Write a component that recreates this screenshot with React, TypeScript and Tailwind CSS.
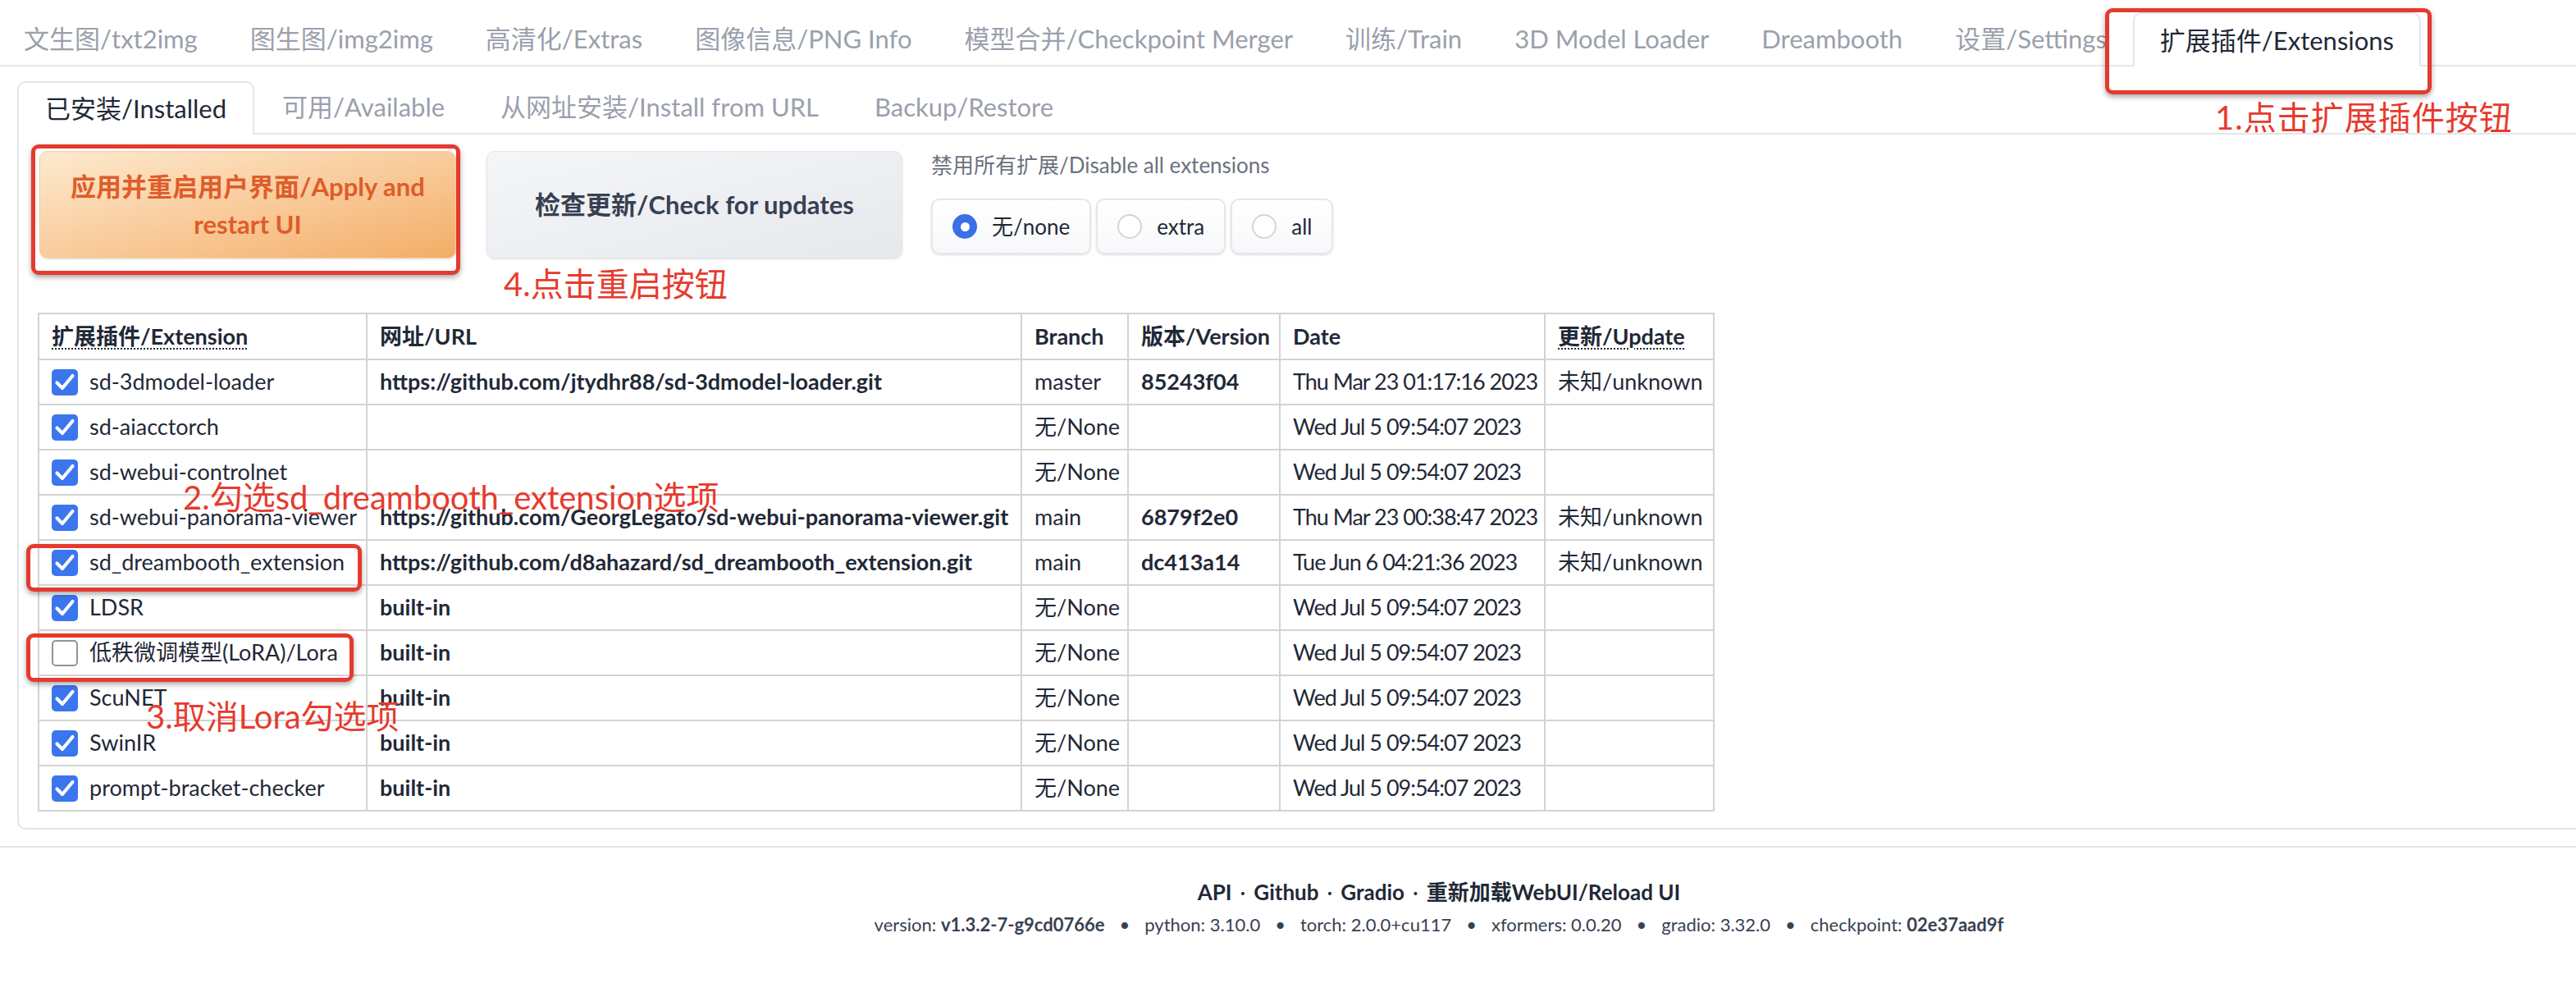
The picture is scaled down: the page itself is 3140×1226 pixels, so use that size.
import React from 'react'

const mainTabs = [
  '文生图/txt2img',
  '图生图/img2img',
  '高清化/Extras',
  '图像信息/PNG Info',
  '模型合并/Checkpoint Merger',
  '训练/Train',
  '3D Model Loader',
  'Dreambooth',
  '设置/Settings',
  '扩展插件/Extensions',
]

const subTabs = ['已安装/Installed', '可用/Available', '从网址安装/Install from URL', 'Backup/Restore']

type Ext = {
  name: string
  url: string
  branch: string
  version: string
  date: string
  update: string
  on: boolean
}

const NONE_DATE = 'Wed Jul 5 09:54:07 2023'

const exts: Ext[] = [
  { name: 'sd-3dmodel-loader', url: 'https://github.com/jtydhr88/sd-3dmodel-loader.git', branch: 'master', version: '85243f04', date: 'Thu Mar 23 01:17:16 2023', update: '未知/unknown', on: true },
  { name: 'sd-aiacctorch', url: '', branch: '无/None', version: '', date: NONE_DATE, update: '', on: true },
  { name: 'sd-webui-controlnet', url: '', branch: '无/None', version: '', date: NONE_DATE, update: '', on: true },
  { name: 'sd-webui-panorama-viewer', url: 'https://github.com/GeorgLegato/sd-webui-panorama-viewer.git', branch: 'main', version: '6879f2e0', date: 'Thu Mar 23 00:38:47 2023', update: '未知/unknown', on: true },
  { name: 'sd_dreambooth_extension', url: 'https://github.com/d8ahazard/sd_dreambooth_extension.git', branch: 'main', version: 'dc413a14', date: 'Tue Jun 6 04:21:36 2023', update: '未知/unknown', on: true },
  { name: 'LDSR', url: 'built-in', branch: '无/None', version: '', date: NONE_DATE, update: '', on: true },
  { name: '低秩微调模型(LoRA)/Lora', url: 'built-in', branch: '无/None', version: '', date: NONE_DATE, update: '', on: false },
  { name: 'ScuNET', url: 'built-in', branch: '无/None', version: '', date: NONE_DATE, update: '', on: true },
  { name: 'SwinIR', url: 'built-in', branch: '无/None', version: '', date: NONE_DATE, update: '', on: true },
  { name: 'prompt-bracket-checker', url: 'built-in', branch: '无/None', version: '', date: NONE_DATE, update: '', on: true },
]

function Checkbox({ on }: { on: boolean }) {
  if (!on) {
    return <div className="h-[32px] w-[32px] shrink-0 rounded-[5px] border-2 border-[#8f949c] bg-white" />
  }
  return (
    <div className="flex h-[32px] w-[32px] shrink-0 items-center justify-center rounded-[5px] bg-[#3b76ef]">
      <svg width="32" height="32" viewBox="0 0 32 32" fill="none">
        <path d="M6.5 16.5l6.5 6.5 12.5-15" stroke="white" strokeWidth="4.2" strokeLinecap="round" strokeLinejoin="round" />
      </svg>
    </div>
  )
}

function Radio({ label, on }: { label: string; on?: boolean }) {
  return (
    <div className="flex h-[68px] items-center gap-[18px] rounded-[10px] border-2 border-[#e5e7eb] bg-linear-to-b from-white to-[#f7f8fa] px-[24px] text-[26px] text-[#1f2937] shadow-sm">
      {on ? (
        <div className="flex h-[30px] w-[30px] items-center justify-center rounded-full bg-[#3b6fe6]">
          <div className="h-[11px] w-[11px] rounded-full bg-white" />
        </div>
      ) : (
        <div className="h-[30px] w-[30px] rounded-full border-2 border-[#d1d5db] bg-white" />
      )}
      <span>{label}</span>
    </div>
  )
}

const cell = 'border-2 border-[#d3d3d3] px-[15px] whitespace-nowrap'

export default function App() {
  return (
    <div className="relative min-h-screen w-full overflow-hidden bg-white text-[#1f2937] [font-family:Lato,'Noto_Sans_CJK_SC',sans-serif]">
      {/* main tabs */}
      <div className="border-b-2 border-[#e4e5ea]">
        <div className="-ml-[3px] flex h-[79px] items-end text-[31px]">
          {mainTabs.map((t, i) =>
            i === mainTabs.length - 1 ? (
              <div key={t} className="-mb-[2px] flex h-[66px] items-center rounded-t-[10px] border-2 border-b-0 border-[#e4e5ea] bg-white px-[31px] text-[#1f2937]">
                {t}
              </div>
            ) : (
              <div key={t} className="flex h-[64px] items-center px-[32px] text-[#9aa0ac]">
                {t}
              </div>
            ),
          )}
        </div>
      </div>

      <div className="pl-[21px] pt-[20px]">
        {/* sub tabs */}
        <div className="flex h-[63px] items-end border-b-2 border-[#e4e5ea] text-[31px]">
          {subTabs.map((t, i) =>
            i === 0 ? (
              <div key={t} className="-mb-[2px] flex h-[65px] items-center rounded-t-[10px] border-2 border-b-0 border-[#e4e5ea] bg-white px-[32px] text-[#1f2937]">
                {t}
              </div>
            ) : (
              <div key={t} className="flex h-[63px] items-center px-[34px] text-[#9aa0ac]">
                {t}
              </div>
            ),
          )}
        </div>

        {/* panel */}
        <div className="rounded-bl-[10px] border-2 border-t-0 border-r-0 border-[#e4e5ea] pb-[20px] pl-[25px] pt-[20px]">
          <div className="flex items-start">
            <button className="flex h-[131px] w-[508px] items-center justify-center rounded-[10px] border border-[#f9cf9e] bg-linear-to-br from-[#fdeacf] to-[#f3ad66] text-center text-[31px] font-bold leading-[46px] text-[#de5d2a] shadow-sm">
              <span>
                应用并重启用户界面/Apply and
                <br />
                restart UI
              </span>
            </button>
            <button className="ml-[37px] flex h-[131px] w-[507px] items-center justify-center rounded-[10px] border border-[#e5e7eb] bg-linear-to-br from-[#f5f6f8] to-[#e6e8ec] text-[31px] font-bold text-[#374151] shadow-sm">
              检查更新/Check for updates
            </button>
            <div className="ml-[35px] pt-[4px]">
              <div className="text-[26px] leading-[26px] text-[#6b7280]">禁用所有扩展/Disable all extensions</div>
              <div className="mt-[28px] flex gap-[6px]">
                <Radio label="无/none" on />
                <Radio label="extra" />
                <Radio label="all" />
              </div>
            </div>
          </div>

          <table className="-ml-[2px] mt-[66px] w-[2042px] table-fixed border-collapse text-[27px] text-[#1f2937]">
            <colgroup>
              <col className="w-[400px]" />
              <col className="w-[798px]" />
              <col className="w-[130px]" />
              <col className="w-[185px]" />
              <col className="w-[323px]" />
              <col className="w-[206px]" />
            </colgroup>
            <thead>
              <tr className="h-[56px] text-left font-bold">
                <th className={cell}>
                  <span className="underline decoration-dotted decoration-2 underline-offset-[5px]">扩展插件/Extension</span>
                </th>
                <th className={cell}>网址/URL</th>
                <th className={cell}>Branch</th>
                <th className={cell}>版本/Version</th>
                <th className={cell}>Date</th>
                <th className={cell}>
                  <span className="underline decoration-dotted decoration-2 underline-offset-[5px]">更新/Update</span>
                </th>
              </tr>
            </thead>
            <tbody>
              {exts.map((e) => (
                <tr key={e.name} className="h-[55px]">
                  <td className={cell}>
                    <div className="flex items-center gap-[14px]">
                      <Checkbox on={e.on} />
                      <span>{e.name}</span>
                    </div>
                  </td>
                  <td className={`${cell} font-bold`}>{e.url}</td>
                  <td className={cell}>{e.branch}</td>
                  <td className={`${cell} font-bold`}>{e.version}</td>
                  <td className={`${cell} tracking-[-1px]`}>{e.date}</td>
                  <td className={cell}>{e.update}</td>
                </tr>
              ))}
            </tbody>
          </table>
        </div>
      </div>

      {/* footer */}
      <div className="mt-[20px] border-t-2 border-[#e4e5ea] pl-[368px] pt-[34px] text-center">
        <div className="h-[40px] text-[26px] font-bold leading-[40px] text-[#1f2937]">
          API<span className="mx-[10px] font-normal">·</span>Github<span className="mx-[10px] font-normal">·</span>Gradio<span className="mx-[10px] font-normal">·</span>重新加载WebUI/Reload UI
        </div>
        <div className="h-[40px] text-[22px] leading-[40px] text-[#374151]">
          version: <b>v1.3.2-7-g9cd0766e</b>
          <span className="mx-[18px]">•</span>python: 3.10.0
          <span className="mx-[18px]">•</span>torch: 2.0.0+cu117
          <span className="mx-[18px]">•</span>xformers: 0.0.20
          <span className="mx-[18px]">•</span>gradio: 3.32.0
          <span className="mx-[18px]">•</span>checkpoint: <b>02e37aad9f</b>
        </div>
      </div>

      {/* annotations */}
      <div className="pointer-events-none absolute left-[2566px] top-[10px] h-[105px] w-[398px] rounded-[9px] border-[5px] border-[#e53a2e] shadow-[0_3px_6px_rgba(0,0,0,0.35)]" />
      <div className="absolute left-[2700px] top-[123px] text-[40px] leading-none tracking-[1px] text-[#e63b2e]">1.点击扩展插件按钮</div>

      <div className="pointer-events-none absolute left-[38px] top-[176px] h-[159px] w-[523px] rounded-[9px] border-[5px] border-[#e53a2e] shadow-[0_3px_6px_rgba(0,0,0,0.35)]" />
      <div className="absolute left-[614px] top-[326px] text-[40px] leading-none text-[#e63b2e]">4.点击重启按钮</div>

      <div className="absolute left-[223px] top-[586px] text-[40px] leading-none text-[#e63b2e]">2.勾选sd_dreambooth_extension选项</div>
      <div className="pointer-events-none absolute left-[32px] top-[663px] h-[58px] w-[409px] rounded-[9px] border-[5px] border-[#e53a2e] shadow-[0_3px_6px_rgba(0,0,0,0.35)]" />

      <div className="pointer-events-none absolute left-[32px] top-[772px] h-[59px] w-[399px] rounded-[9px] border-[5px] border-[#e53a2e] shadow-[0_3px_6px_rgba(0,0,0,0.35)]" />
      <div className="absolute left-[178px] top-[853px] text-[40px] leading-none text-[#e63b2e]">3.取消Lora勾选项</div>
    </div>
  )
}
